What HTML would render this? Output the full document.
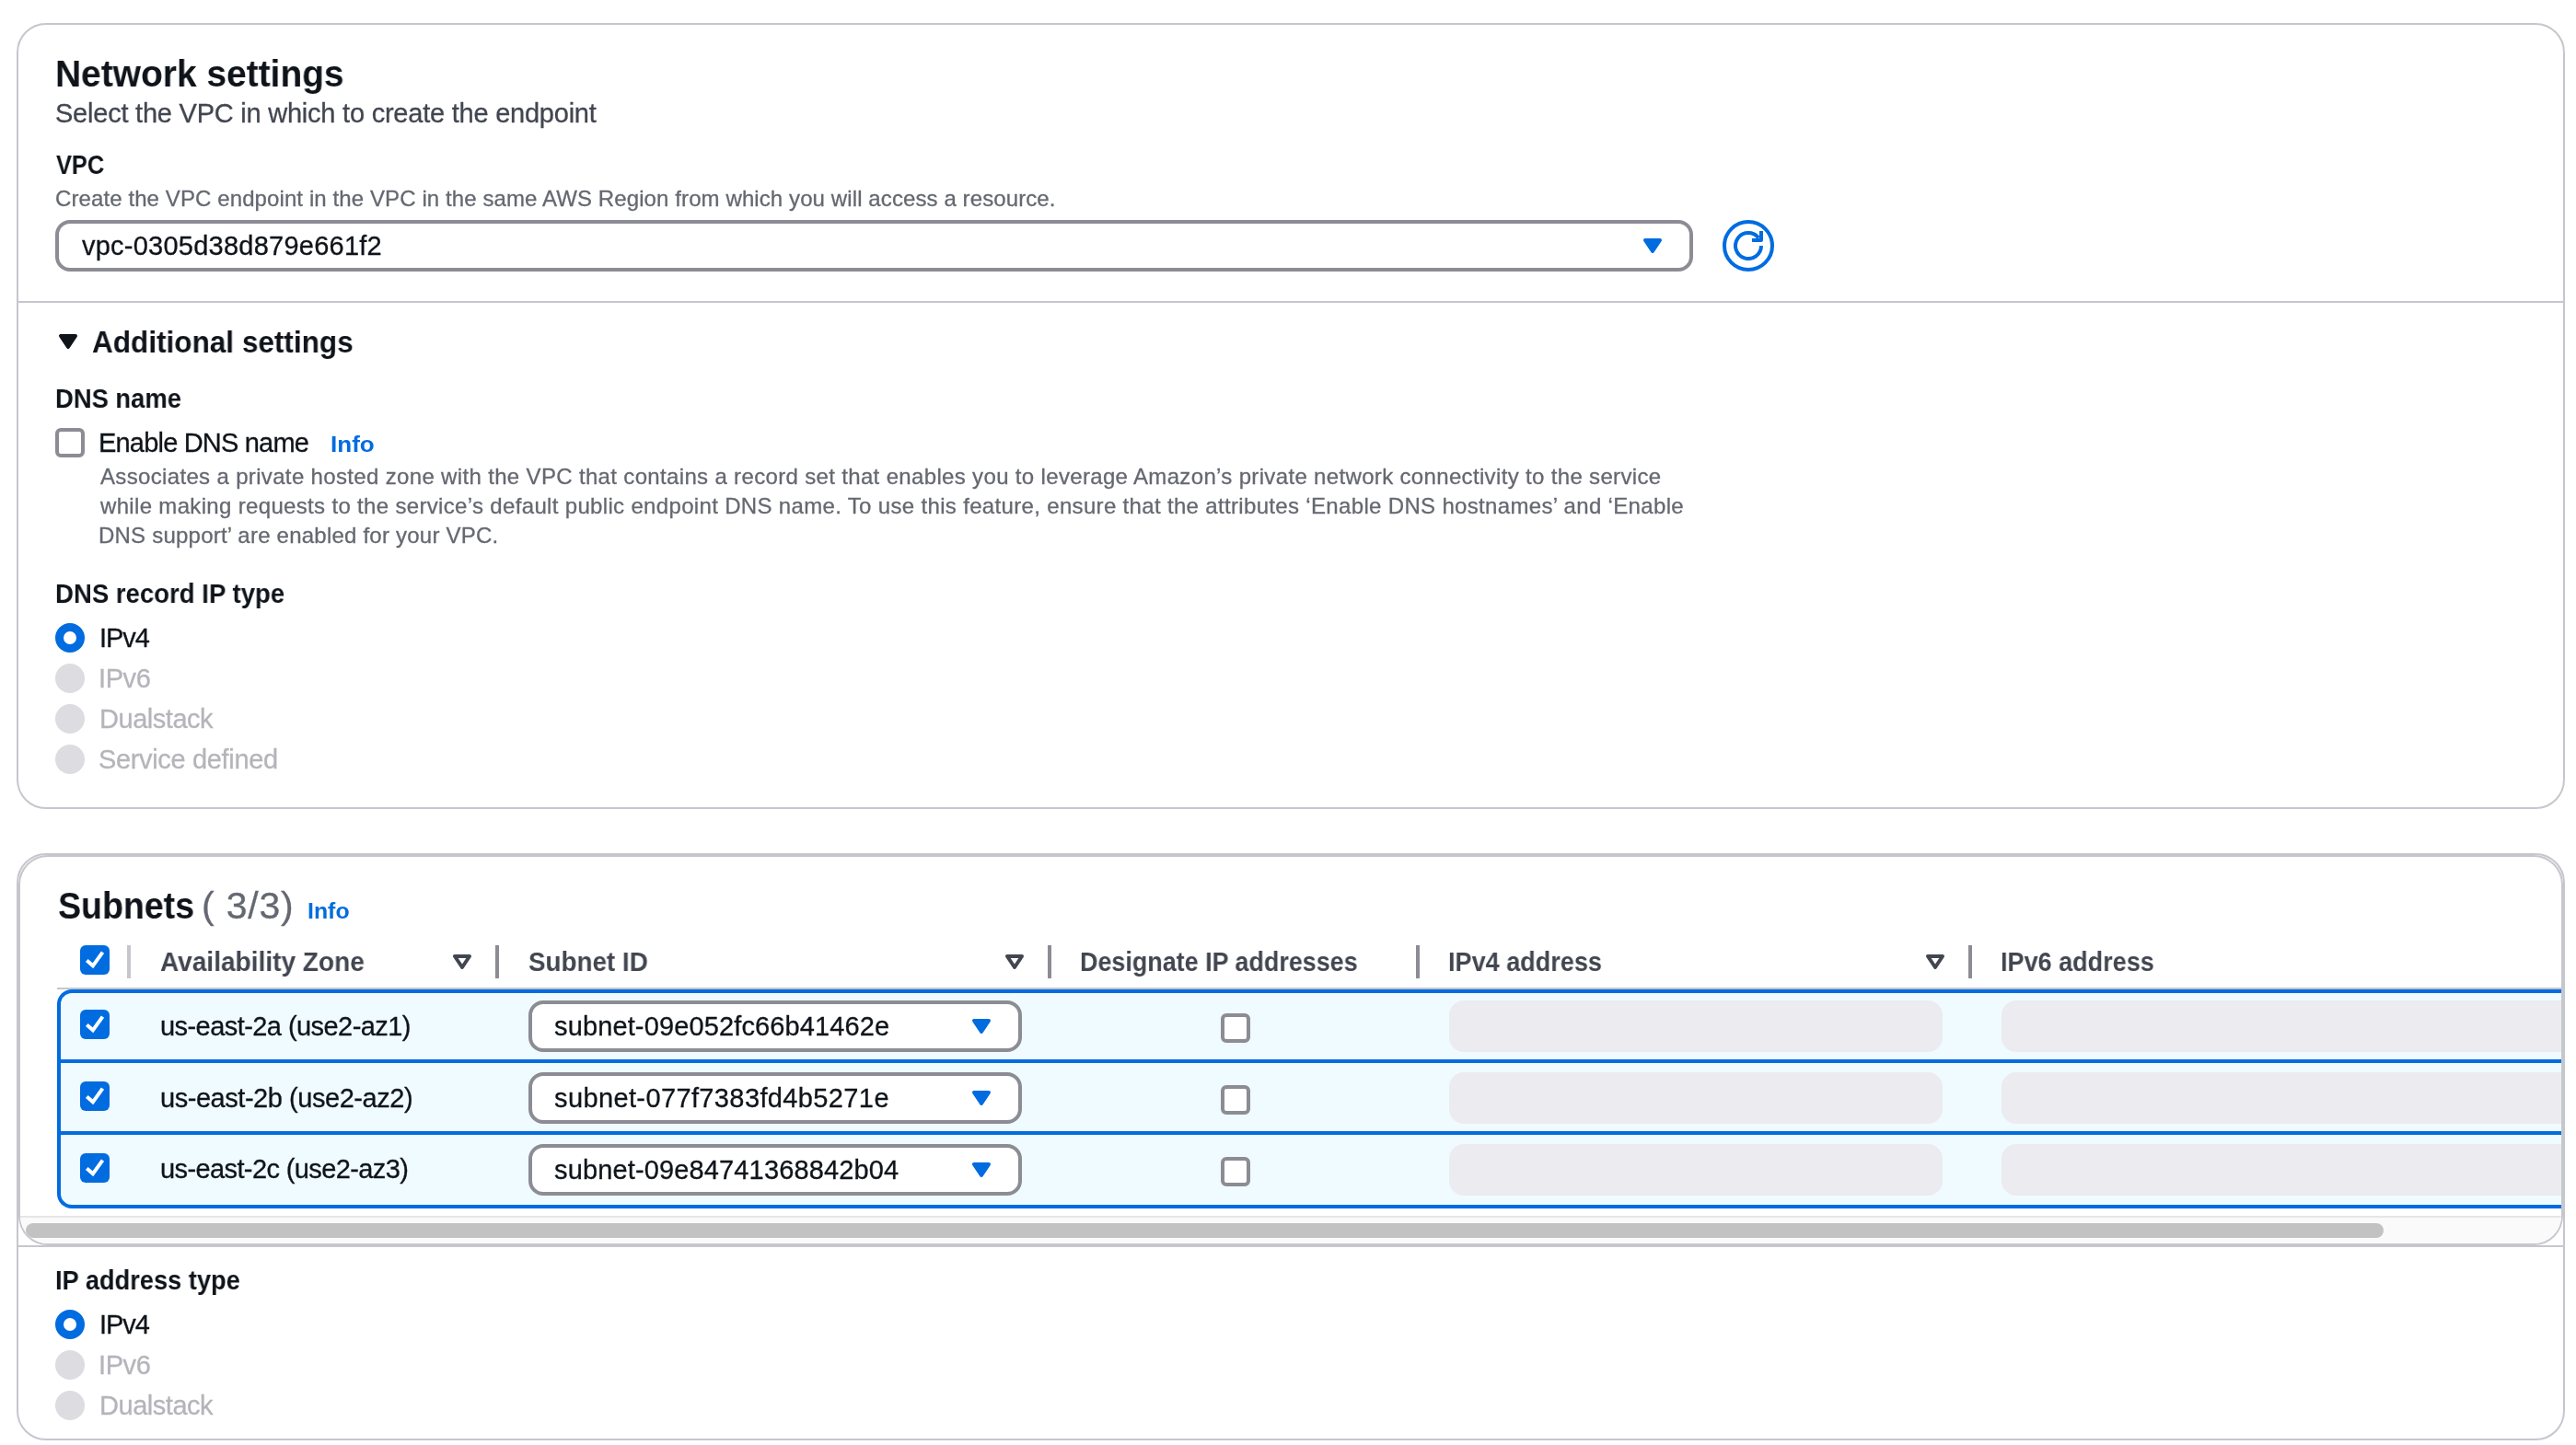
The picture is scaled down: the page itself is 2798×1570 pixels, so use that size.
<!DOCTYPE html>
<html><head><meta charset="utf-8"><title>Network settings</title><style>
html,body{margin:0;padding:0;background:#fff;overflow:hidden}
body{font-family:"Liberation Sans",sans-serif}
#root{position:relative;width:2798px;height:1570px;overflow:hidden;transform-origin:0 0;background:#fff}
.a{position:absolute}
.t{position:absolute;white-space:nowrap;will-change:transform;transform-origin:0 0}
.card{box-sizing:border-box;border:2px solid #c6c6cd;border-radius:32px;background:#fff}
.sel{box-sizing:border-box;border:4px solid #8c8c94;border-radius:16px;background:#fff}
.dinp{box-sizing:border-box;border-radius:16px;background:#ebebf0}
.cbx{width:32px;height:32px;box-sizing:border-box;border-radius:6px}
.cbx.on{background:#006ce0}
.cbx.off{background:#fff;border:4px solid #8c8c94}
.rad{width:32px;height:32px;box-sizing:border-box;border-radius:50%}
.rad.on{background:#fff;border:9.5px solid #006ce0}
.rad.dis{background:#dcdce1}
</style></head><body>
<div id="root">
<div class="a card" style="left:18px;top:25px;width:2768px;height:854px"></div>
<div class="a" style="left:20px;top:327px;width:2764px;height:2px;background:#c6c6cd"></div>
<div class="a sel" style="left:60px;top:239px;width:1779px;height:56px"></div>
<svg class="a" style="left:1779px;top:251px" width="32" height="32" viewBox="0 0 16 16"><path d="M4 5h8l-4 6-4-6z" fill="#006ce0" stroke="#006ce0" stroke-width="2" stroke-linejoin="round"/></svg>
<div class="a" style="left:1871px;top:239px;width:56px;height:56px;box-sizing:border-box;border:4px solid #006ce0;border-radius:50%"></div>
<svg class="a" style="left:1883px;top:251px" width="32" height="32" viewBox="0 0 16 16"><path d="M15 8A7 7 0 1 1 13.6 3.8" fill="none" stroke="#006ce0" stroke-width="2"/><path d="M15 0V5H10" fill="none" stroke="#006ce0" stroke-width="2" stroke-linejoin="round"/></svg>
<svg class="a" style="left:58px;top:355px" width="32" height="32" viewBox="0 0 16 16"><path d="M4 5h8l-4 6-4-6z" fill="#0f141a" stroke="#0f141a" stroke-width="2" stroke-linejoin="round"/></svg>
<div class="a cbx off" style="left:60px;top:465px"></div>
<div class="a rad on" style="left:60px;top:677px"></div>
<div class="a rad dis" style="left:60px;top:721px"></div>
<div class="a rad dis" style="left:60px;top:765px"></div>
<div class="a rad dis" style="left:60px;top:809px"></div>
<div class="a card" style="left:18px;top:927px;width:2768px;height:638px"></div>
<div class="a" style="left:20px;top:1353px;width:2764px;height:2px;background:#c6c6cd"></div>
<div class="a" style="left:20px;top:929px;width:2764px;height:424px;box-sizing:border-box;border:2px solid #c6c6cd;border-radius:32px;overflow:hidden;background:#fff">
<div class="a cbx on" style="left:65px;top:96px"></div><svg class="a" style="left:65px;top:96px" width="32" height="32" viewBox="0 0 32 32"><polyline points="7.3,16.4 13.9,22.3 24.5,7.6" fill="none" stroke="#fff" stroke-width="4"/></svg>
<div class="a" style="left:116px;top:96px;width:4px;height:36px;background:#c6c6cd"></div>
<div class="a" style="left:516px;top:96px;width:4px;height:36px;background:#8c8c94"></div>
<div class="a" style="left:1116px;top:96px;width:4px;height:36px;background:#8c8c94"></div>
<div class="a" style="left:1516px;top:96px;width:4px;height:36px;background:#8c8c94"></div>
<div class="a" style="left:2116px;top:96px;width:4px;height:36px;background:#8c8c94"></div>
<svg class="a" style="left:464px;top:98px" width="32" height="32" viewBox="0 0 16 16"><path d="M4 5h8l-4 6-4-6z" fill="none" stroke="#424650" stroke-width="2" stroke-linejoin="round"/></svg>
<svg class="a" style="left:1064px;top:98px" width="32" height="32" viewBox="0 0 16 16"><path d="M4 5h8l-4 6-4-6z" fill="none" stroke="#424650" stroke-width="2" stroke-linejoin="round"/></svg>
<svg class="a" style="left:2064px;top:98px" width="32" height="32" viewBox="0 0 16 16"><path d="M4 5h8l-4 6-4-6z" fill="none" stroke="#424650" stroke-width="2" stroke-linejoin="round"/></svg>
<div class="a" style="left:40px;top:142px;width:3000px;height:2px;background:#c6c6cd"></div>
<div class="a" style="left:40px;top:144px;width:3000px;height:238px;box-sizing:border-box;border:4px solid #006ce0;border-right:none;border-radius:16px 0 0 16px;background:#f0fbff"></div>
<div class="a" style="left:40px;top:220px;width:3000px;height:4px;background:#006ce0"></div>
<div class="a" style="left:40px;top:298px;width:3000px;height:4px;background:#006ce0"></div>
<div class="a cbx on" style="left:65px;top:166px"></div><svg class="a" style="left:65px;top:166px" width="32" height="32" viewBox="0 0 32 32"><polyline points="7.3,16.4 13.9,22.3 24.5,7.6" fill="none" stroke="#fff" stroke-width="4"/></svg>
<div class="a sel" style="left:552px;top:156px;width:536px;height:56px"></div>
<svg class="a" style="left:1028px;top:168px" width="32" height="32" viewBox="0 0 16 16"><path d="M4 5h8l-4 6-4-6z" fill="#006ce0" stroke="#006ce0" stroke-width="2" stroke-linejoin="round"/></svg>
<div class="a cbx off" style="left:1304px;top:170px"></div>
<div class="a dinp" style="left:1552px;top:156px;width:536px;height:56px"></div>
<div class="a dinp" style="left:2152px;top:156px;width:1000px;height:56px"></div>
<div class="a cbx on" style="left:65px;top:244px"></div><svg class="a" style="left:65px;top:244px" width="32" height="32" viewBox="0 0 32 32"><polyline points="7.3,16.4 13.9,22.3 24.5,7.6" fill="none" stroke="#fff" stroke-width="4"/></svg>
<div class="a sel" style="left:552px;top:234px;width:536px;height:56px"></div>
<svg class="a" style="left:1028px;top:246px" width="32" height="32" viewBox="0 0 16 16"><path d="M4 5h8l-4 6-4-6z" fill="#006ce0" stroke="#006ce0" stroke-width="2" stroke-linejoin="round"/></svg>
<div class="a cbx off" style="left:1304px;top:248px"></div>
<div class="a dinp" style="left:1552px;top:234px;width:536px;height:56px"></div>
<div class="a dinp" style="left:2152px;top:234px;width:1000px;height:56px"></div>
<div class="a cbx on" style="left:65px;top:322px"></div><svg class="a" style="left:65px;top:322px" width="32" height="32" viewBox="0 0 32 32"><polyline points="7.3,16.4 13.9,22.3 24.5,7.6" fill="none" stroke="#fff" stroke-width="4"/></svg>
<div class="a sel" style="left:552px;top:312px;width:536px;height:56px"></div>
<svg class="a" style="left:1028px;top:324px" width="32" height="32" viewBox="0 0 16 16"><path d="M4 5h8l-4 6-4-6z" fill="#006ce0" stroke="#006ce0" stroke-width="2" stroke-linejoin="round"/></svg>
<div class="a cbx off" style="left:1304px;top:326px"></div>
<div class="a dinp" style="left:1552px;top:312px;width:536px;height:56px"></div>
<div class="a dinp" style="left:2152px;top:312px;width:1000px;height:56px"></div>
<div class="a" style="left:-2px;top:390px;width:2764px;height:2px;background:#e6e6e6"></div>
<div class="a" style="left:-2px;top:392px;width:2764px;height:28px;background:#fafafa"></div>
<div class="a" style="left:6px;top:398px;width:2561px;height:16px;border-radius:8px;background:#c2c2c2"></div>
</div>
<div class="a rad on" style="left:60px;top:1423px"></div>
<div class="a rad dis" style="left:60px;top:1467px"></div>
<div class="a rad dis" style="left:60px;top:1511px"></div>
<div id="t1" class="t" style="left:60.31px;top:59.79px;font-size:41px;line-height:41px;font-weight:700;color:#0f141a;letter-spacing:0.000px;transform:scaleX(0.9493)">Network settings</div>
<div id="t2" class="t" style="left:60.00px;top:109.45px;font-size:29px;line-height:29px;font-weight:400;color:#424650;letter-spacing:-0.228px;-webkit-text-stroke:0.3px #424650">Select the VPC in which to create the endpoint</div>
<div id="t3" class="t" style="left:60.60px;top:165.45px;font-size:29px;line-height:29px;font-weight:700;color:#0f141a;letter-spacing:0.000px;transform:scaleX(0.8749)">VPC</div>
<div id="t4" class="t" style="left:60.00px;top:203.68px;font-size:24px;line-height:24px;font-weight:400;color:#656871;letter-spacing:0.100px;-webkit-text-stroke:0.3px #656871">Create the VPC endpoint in the VPC in the same AWS Region from which you will access a resource.</div>
<div id="t5" class="t" style="left:89.00px;top:253.45px;font-size:29px;line-height:29px;font-weight:400;color:#0f141a;letter-spacing:0.240px;-webkit-text-stroke:0.3px #0f141a">vpc-0305d38d879e661f2</div>
<div id="t6" class="t" style="left:99.78px;top:355.98px;font-size:32.5px;line-height:32.5px;font-weight:700;color:#0f141a;letter-spacing:0.000px;transform:scaleX(0.9698)">Additional settings</div>
<div id="t7" class="t" style="left:59.73px;top:419.45px;font-size:29px;line-height:29px;font-weight:700;color:#0f141a;letter-spacing:0.000px;transform:scaleX(0.9435)">DNS name</div>
<div id="t8" class="t" style="left:107.00px;top:466.95px;font-size:29px;line-height:29px;font-weight:400;color:#0f141a;letter-spacing:-0.804px;-webkit-text-stroke:0.3px #0f141a">Enable DNS name</div>
<div id="t9" class="t" style="left:358.87px;top:471.18px;font-size:24px;line-height:24px;font-weight:700;color:#006ce0;letter-spacing:0.000px;transform:scaleX(1.0845)">Info</div>
<div id="t10" class="t" style="left:109.00px;top:505.68px;font-size:24px;line-height:24px;font-weight:400;color:#656871;letter-spacing:0.340px;-webkit-text-stroke:0.3px #656871">Associates a private hosted zone with the VPC that contains a record set that enables you to leverage Amazon’s private network connectivity to the service</div>
<div id="t11" class="t" style="left:109.00px;top:537.68px;font-size:24px;line-height:24px;font-weight:400;color:#656871;letter-spacing:0.332px;-webkit-text-stroke:0.3px #656871">while making requests to the service’s default public endpoint DNS name. To use this feature, ensure that the attributes ‘Enable DNS hostnames’ and ‘Enable</div>
<div id="t12" class="t" style="left:107.20px;top:569.68px;font-size:24px;line-height:24px;font-weight:400;color:#656871;letter-spacing:0.221px;-webkit-text-stroke:0.3px #656871">DNS support’ are enabled for your VPC.</div>
<div id="t13" class="t" style="left:59.70px;top:631.45px;font-size:29px;line-height:29px;font-weight:700;color:#0f141a;letter-spacing:0.000px;transform:scaleX(0.9504)">DNS record IP type</div>
<div id="t14" class="t" style="left:107.75px;top:679.45px;font-size:29px;line-height:29px;font-weight:400;color:#0f141a;letter-spacing:-1.083px;-webkit-text-stroke:0.3px #0f141a">IPv4</div>
<div id="t15" class="t" style="left:106.75px;top:723.45px;font-size:29px;line-height:29px;font-weight:400;color:#b4b4bb;letter-spacing:-0.417px;-webkit-text-stroke:0.3px #b4b4bb">IPv6</div>
<div id="t16" class="t" style="left:107.75px;top:767.45px;font-size:29px;line-height:29px;font-weight:400;color:#b4b4bb;letter-spacing:-0.470px;-webkit-text-stroke:0.3px #b4b4bb">Dualstack</div>
<div id="t17" class="t" style="left:107.25px;top:811.45px;font-size:29px;line-height:29px;font-weight:400;color:#b4b4bb;letter-spacing:-0.340px;-webkit-text-stroke:0.3px #b4b4bb">Service defined</div>
<div id="t18" class="t" style="left:63.08px;top:963.79px;font-size:41px;line-height:41px;font-weight:700;color:#0f141a;letter-spacing:0.000px;transform:scaleX(0.9153)">Subnets</div>
<div id="t19" class="t" style="left:219.00px;top:963.79px;font-size:41px;line-height:41px;font-weight:400;color:#656871;letter-spacing:0.800px;-webkit-text-stroke:0.3px #656871">( 3/3)</div>
<div id="t20" class="t" style="left:333.95px;top:978.18px;font-size:24px;line-height:24px;font-weight:700;color:#006ce0;letter-spacing:0.000px;transform:scaleX(1.0362)">Info</div>
<div id="t21" class="t" style="left:174.03px;top:1031.45px;font-size:29px;line-height:29px;font-weight:700;color:#424650;letter-spacing:0.000px;transform:scaleX(0.9672)">Availability Zone</div>
<div id="t22" class="t" style="left:574.04px;top:1031.45px;font-size:29px;line-height:29px;font-weight:700;color:#424650;letter-spacing:0.000px;transform:scaleX(0.9589)">Subnet ID</div>
<div id="t23" class="t" style="left:1173.14px;top:1031.45px;font-size:29px;line-height:29px;font-weight:700;color:#424650;letter-spacing:0.000px;transform:scaleX(0.9277)">Designate IP addresses</div>
<div id="t24" class="t" style="left:1573.17px;top:1031.45px;font-size:29px;line-height:29px;font-weight:700;color:#424650;letter-spacing:0.000px;transform:scaleX(0.9331)">IPv4 address</div>
<div id="t25" class="t" style="left:2173.12px;top:1031.45px;font-size:29px;line-height:29px;font-weight:700;color:#424650;letter-spacing:0.000px;transform:scaleX(0.9323)">IPv6 address</div>
<div id="t26" class="t" style="left:174.20px;top:1100.75px;font-size:29px;line-height:29px;font-weight:400;color:#0f141a;letter-spacing:-0.560px;-webkit-text-stroke:0.3px #0f141a">us-east-2a (use2-az1)</div>
<div id="t27" class="t" style="left:174.20px;top:1178.65px;font-size:29px;line-height:29px;font-weight:400;color:#0f141a;letter-spacing:-0.455px;-webkit-text-stroke:0.3px #0f141a">us-east-2b (use2-az2)</div>
<div id="t28" class="t" style="left:174.20px;top:1256.45px;font-size:29px;line-height:29px;font-weight:400;color:#0f141a;letter-spacing:-0.610px;-webkit-text-stroke:0.3px #0f141a">us-east-2c (use2-az3)</div>
<div id="t29" class="t" style="left:602.00px;top:1100.70px;font-size:29px;line-height:29px;font-weight:400;color:#0f141a;letter-spacing:0.131px;-webkit-text-stroke:0.3px #0f141a">subnet-09e052fc66b41462e</div>
<div id="t30" class="t" style="left:602.00px;top:1178.70px;font-size:29px;line-height:29px;font-weight:400;color:#0f141a;letter-spacing:0.380px;-webkit-text-stroke:0.3px #0f141a">subnet-077f7383fd4b5271e</div>
<div id="t31" class="t" style="left:602.00px;top:1256.70px;font-size:29px;line-height:29px;font-weight:400;color:#0f141a;letter-spacing:0.142px;-webkit-text-stroke:0.3px #0f141a">subnet-09e84741368842b04</div>
<div id="t32" class="t" style="left:60.38px;top:1376.70px;font-size:29px;line-height:29px;font-weight:700;color:#0f141a;letter-spacing:0.000px;transform:scaleX(0.9388)">IP address type</div>
<div id="t33" class="t" style="left:107.75px;top:1424.95px;font-size:29px;line-height:29px;font-weight:400;color:#0f141a;letter-spacing:-1.083px;-webkit-text-stroke:0.3px #0f141a">IPv4</div>
<div id="t34" class="t" style="left:106.75px;top:1469.45px;font-size:29px;line-height:29px;font-weight:400;color:#b4b4bb;letter-spacing:-0.417px;-webkit-text-stroke:0.3px #b4b4bb">IPv6</div>
<div id="t35" class="t" style="left:107.75px;top:1513.45px;font-size:29px;line-height:29px;font-weight:400;color:#b4b4bb;letter-spacing:-0.470px;-webkit-text-stroke:0.3px #b4b4bb">Dualstack</div>
</div>
<script>(function(){var w=window.innerWidth;if(w&&Math.abs(w-2798)>2){document.getElementById("root").style.transform="scale("+(w/2798)+")";}})();</script>
</body></html>
